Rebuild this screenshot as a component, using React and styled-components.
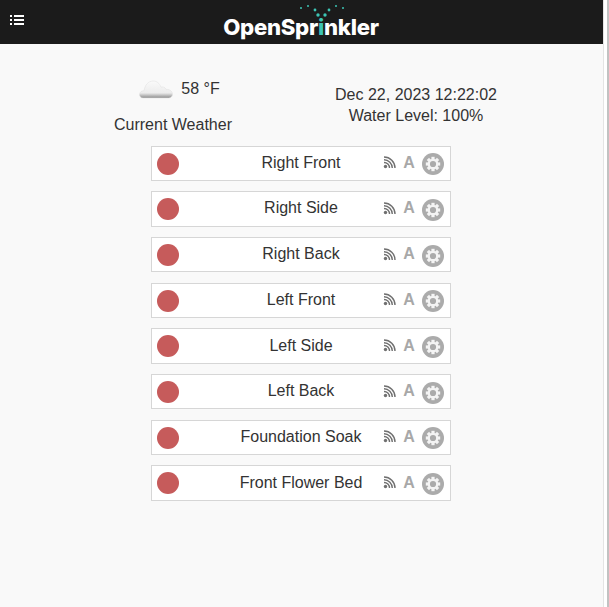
import React from 'react';
import styled, { createGlobalStyle } from 'styled-components';

const Global = createGlobalStyle`
  html, body { margin: 0; padding: 0; height: 100%; background: #fff; }
  #root { height: 607px; }
`;
const Page = styled.div`
  width: 609px; height: 607px; overflow: hidden; display: flex;
  font-family: "Liberation Sans", Arial, sans-serif; color: #333; background: #fff;
`;
const Main = styled.div`
  width: 603px; flex: none; background: #f9f9f9; display: flex; flex-direction: column;
  border-right: 1px solid #e4e4e4;
`;
const Scroll = styled.div`
  flex: 1; display: flex; justify-content: flex-end;
`;
const Thumb = styled.div`
  width: 2px; height: 100%; background: #c2c2c2;
`;
const Header = styled.header`
  height: 44px; background: #1b1b1b; display: flex; align-items: center; justify-content: center; position: relative;
`;
const Menu = styled.svg`
  position: absolute; left: 10px; top: 15px;
`;
const Logo = styled.div`
  position: relative; margin-top: 9px; margin-right: 1px; font-family: Inter, "Liberation Sans", sans-serif;
  font-weight: 800; font-size: 22.2px; letter-spacing: -0.3px; color: #fff; line-height: 26px;
`;
const Teal = styled.span` color: #3cc4b4; `;
const Spray = styled.svg` position: absolute; left: 76px; top: -10px; `;
const Status = styled.section`
  display: flex; height: 101.5px; flex: none; box-sizing: border-box;
`;
const Weather = styled.div`
  width: 346px; flex: none; display: flex; flex-direction: column; align-items: center; padding-top: 32px; box-sizing: border-box;
`;
const Temp = styled.div`
  display: flex; align-items: center; gap: 8px; font-size: 16px; height: 26px; margin-bottom: 10px; padding-left: 13px;
`;
const Caption = styled.div` font-size: 16px; line-height: 26px; `;
const Clock = styled.div`
  width: 140px; padding-top: 40px; text-align: center; font-size: 16px; line-height: 21px; white-space: nowrap; display: flex; flex-direction: column; align-items: center;
`;
const List = styled.ul`
  list-style: none; margin: 0 0 0 151px; padding: 0; width: 300px; display: flex; flex-direction: column; gap: 10.2px;
`;
const Row = styled.li`
  height: 35.5px; box-sizing: border-box; border: 1px solid #d6d6d6; background: #fff; position: relative;
  display: flex; align-items: center; justify-content: center; font-size: 16px;
`;
const Dot = styled.span`
  position: absolute; left: 5px; top: 6px; width: 22px; height: 22px; border-radius: 50%; background: #c65b5b;
`;
const Name = styled.span` margin-top: -1px; `;
const Tools = styled.div`
  position: absolute; left: 231px; top: 0; bottom: 0; display: flex; align-items: center; gap: 6px;
`;
const WifiIcon = styled.svg` margin-top: -2px; `;
const GearIcon = styled.svg` margin-top: 2px; margin-left: 1px; `;
const Letter = styled.span`
  font-weight: 700; font-size: 16px; color: #a8a8a8; margin-top: -1px; width: 12px; text-align: center;
`;

const Wifi = () => (
  <WifiIcon width="14" height="14" viewBox="0 0 14 14" fill="none" stroke="#707070" strokeWidth="1.4">
    <circle cx="2.5" cy="11.5" r="1.7" fill="#707070" stroke="none" />
    <path d="M1 7.5a5.5 5.5 0 0 1 5.5 5.5M1 4.7a8.3 8.3 0 0 1 8.3 8.3M1 2a11 11 0 0 1 11 11" />
  </WifiIcon>
);
const Gear = () => {
  const teeth = [0, 45, 90, 135, 180, 225, 270, 315];
  return (
    <GearIcon width="22" height="22" viewBox="0 0 22 22">
      <circle cx="11" cy="11" r="11" fill="#ababab" />
      <g fill="#f4f4f4">
        {teeth.map((a) => <rect key={a} x="9.4" y="3.8" width="3.2" height="3" transform={`rotate(${a} 11 11)`} />)}
      </g>
      <circle cx="11" cy="11" r="4.2" fill="none" stroke="#f4f4f4" strokeWidth="2.2" />
    </GearIcon>
  );
};
const CloudIcon = () => (
  <svg width="34" height="20" viewBox="0 0 34 20">
    <defs>
      <linearGradient id="c" x1="0" y1="0" x2="0" y2="1">
        <stop offset="0" stopColor="#fafafa" />
        <stop offset="0.7" stopColor="#ececec" />
        <stop offset="1" stopColor="#8d8d8d" />
      </linearGradient>
    </defs>
    <path d="M4 19C1.5 19 .5 17 .5 15.5 .5 13 2.8 11.5 5 11.8 5.8 6 9.5 2 14 2c4 0 6.8 2.5 8 6.3C23.5 7.4 26 8 27 10.3c3.5-.4 6.5 2 6.5 5 0 2-1.5 3.7-4 3.7Z" fill="url(#c)" stroke="#dedede" strokeWidth=".5" />
  </svg>
);

const zones = ['Right Front', 'Right Side', 'Right Back', 'Left Front', 'Left Side', 'Left Back', 'Foundation Soak', 'Front Flower Bed'];

export default function App() {
  return (
    <Page>
      <Global />
      <Main>
        <Header>
          <Menu width="14" height="10" viewBox="0 0 14 10" fill="#fff">
            <rect x="0" y="0" width="2" height="2" /><rect x="4" y="0" width="10" height="2" />
            <rect x="0" y="4" width="2" height="2" /><rect x="4" y="4" width="10" height="2" />
            <rect x="0" y="8" width="2" height="2" /><rect x="4" y="8" width="10" height="2" />
          </Menu>
          <Logo>
            <Spray width="50" height="14" viewBox="0 0 50 14" fill="#3cc4b4">
              <circle cx="2" cy="4" r="1" /><circle cx="9" cy="2" r="1" /><circle cx="16" cy="6" r="1.4" />
              <circle cx="19" cy="11" r="1.7" /><circle cx="26" cy="11" r="1.7" /><circle cx="30" cy="6" r="1.4" />
              <circle cx="37" cy="2" r="1" /><circle cx="44" cy="4" r="1" />
            </Spray>
            OpenSpr<Teal>i</Teal>nkler
          </Logo>
        </Header>
        <Status>
          <Weather>
            <Temp><CloudIcon />58 °F</Temp>
            <Caption>Current Weather</Caption>
          </Weather>
          <Clock>
            <div>Dec 22, 2023 12:22:02</div>
            <div>Water Level: 100%</div>
          </Clock>
        </Status>
        <List>
          {zones.map((z) => (
            <Row key={z}>
              <Dot />
              <Name>{z}</Name>
              <Tools><Wifi /><Letter>A</Letter><Gear /></Tools>
            </Row>
          ))}
        </List>
      </Main>
      <Scroll><Thumb /></Scroll>
    </Page>
  );
}
